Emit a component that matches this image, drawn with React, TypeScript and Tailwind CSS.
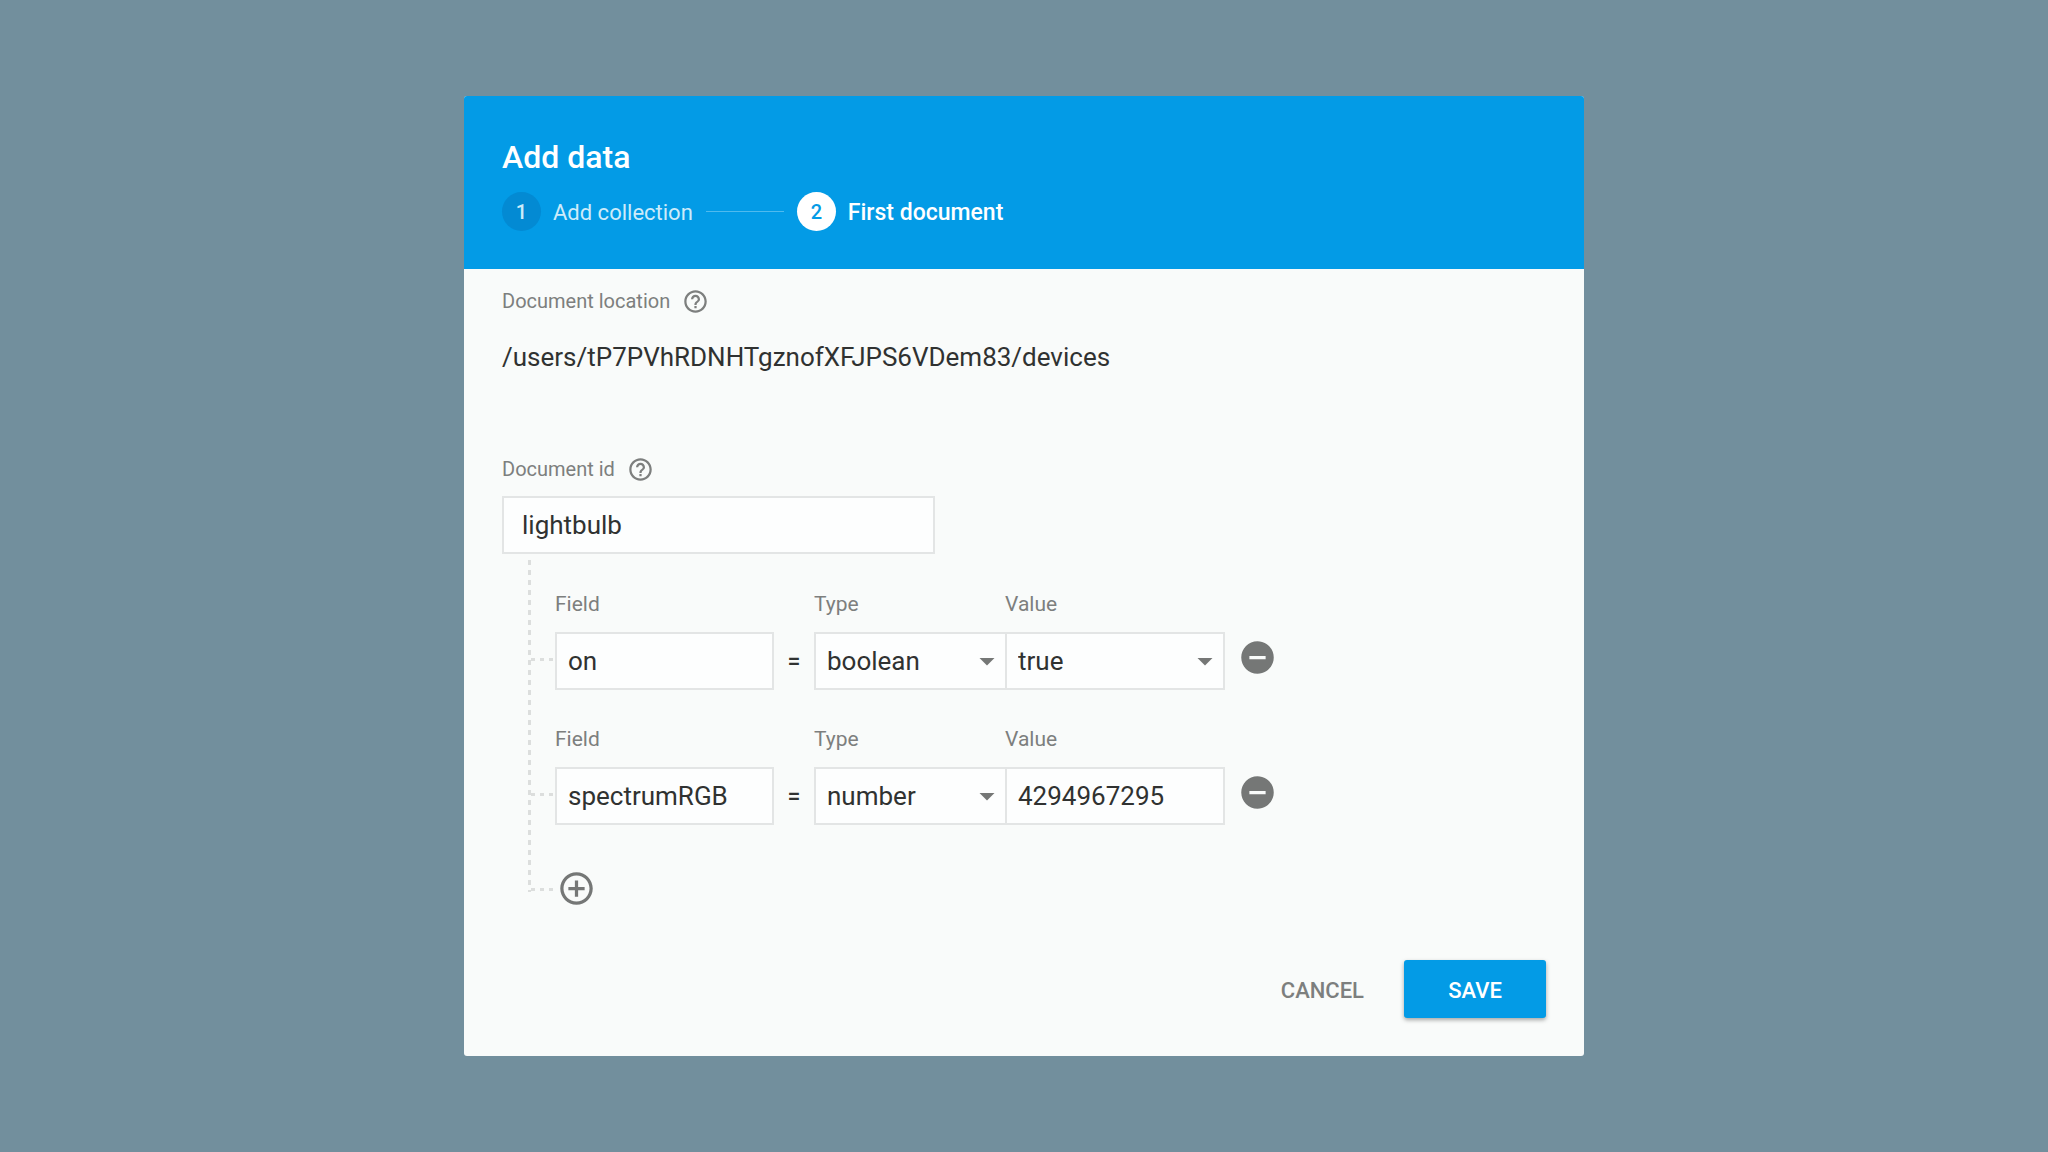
import { useState } from "react";
import type { ReactNode } from "react";
import {
  MdAddCircleOutline,
  MdArrowDropDown,
  MdHelpOutline,
  MdRemoveCircle,
} from "react-icons/md";

interface FieldRow {
  id: number;
  name: string;
  type: string;
  value: string;
}

const TYPES = ["string", "number", "boolean", "map", "array", "null"];

const INITIAL_FIELDS: FieldRow[] = [
  { id: 1, name: "on", type: "boolean", value: "true" },
  { id: 2, name: "spectrumRGB", type: "number", value: "4294967295" },
];

const SECTION_LABEL = "text-[20px] leading-6 text-[#7d7f7e]";
const FIELD_LABEL = "text-[21px] leading-6 text-[#7d7f7e]";
const BOX =
  "h-[58px] w-full rounded-none border-2 border-[#e3e5e5] bg-[#fdfefe] text-[26px] text-[#303231] outline-none";

// Dashed branch from the tree's trunk to a row
function Branch() {
  return (
    <div className="h-[3px] w-[23px] bg-[repeating-linear-gradient(90deg,#dcdedd_0_4px,transparent_4px_9px)]" />
  );
}

function Select({
  id,
  value,
  options,
  onChange,
}: {
  id: string;
  value: string;
  options: string[];
  onChange: (value: string) => void;
}) {
  return (
    <div className="relative">
      <select
        id={id}
        value={value}
        onChange={(e) => onChange(e.target.value)}
        className={`${BOX} appearance-none pl-[11px] pr-10`}
      >
        {options.map((o) => (
          <option key={o}>{o}</option>
        ))}
      </select>
      <MdArrowDropDown
        size={36}
        className="pointer-events-none absolute right-0.5 top-[11px] text-[#757776]"
      />
    </div>
  );
}

function Labelled({
  id,
  label,
  className,
  children,
}: {
  id: string;
  label: string;
  className: string;
  children: ReactNode;
}) {
  return (
    <div className={`flex flex-col gap-4 ${className}`}>
      <label htmlFor={id} className={FIELD_LABEL}>
        {label}
      </label>
      {children}
    </div>
  );
}

function HelpButton({ label }: { label: string }) {
  return (
    <button type="button" aria-label={label} className="text-[#7d7f7e]">
      <MdHelpOutline size={27} />
    </button>
  );
}

export default function App() {
  const [docId, setDocId] = useState("lightbulb");
  const [fields, setFields] = useState(INITIAL_FIELDS);

  const update = (id: number, patch: Partial<FieldRow>) =>
    setFields((rows) => rows.map((r) => (r.id === id ? { ...r, ...patch } : r)));

  const addField = () =>
    setFields((rows) => [...rows, { id: Date.now(), name: "", type: "string", value: "" }]);

  return (
    <main className="flex min-h-screen items-center justify-center bg-[#728f9d] font-[Roboto,sans-serif]">
      <form
        className="w-full max-w-[1120px] overflow-hidden rounded-[3px] bg-[#f9fbfa]"
        onSubmit={(e) => e.preventDefault()}
      >
        {/* Header with stepper */}
        <header className="flex flex-col gap-[15px] bg-[#039be6] px-[38px] pb-[38px] pt-[41px] text-white">
          <h1 className="text-[32px] font-medium leading-10">Add data</h1>
          <ol className="flex items-center">
            <li className="flex items-center gap-3 text-[22px] text-[#cdebfa]">
              <span className="flex size-[39px] items-center justify-center rounded-full bg-[#038ad3] text-[20px] font-medium">
                1
              </span>
              <span className="pt-0.5 leading-8">Add collection</span>
            </li>
            <li aria-hidden className="mx-[13px] h-px w-[78px] bg-[#4fbaee]" />
            <li className="flex items-center gap-3 text-[23px] font-medium">
              <span className="flex size-[39px] items-center justify-center rounded-full bg-white text-[20px] text-[#039be6]">
                2
              </span>
              <span className="pt-0.5 leading-8">First document</span>
            </li>
          </ol>
        </header>

        <div className="px-[38px] pb-[38px] pt-5">
          <div className="flex h-6 items-center gap-3">
            <span className={SECTION_LABEL}>Document location</span>
            <HelpButton label="About the document location" />
          </div>
          <p className="mt-7 text-[26px] leading-8 text-[#303231]">
            /users/tP7PVhRDNHTgznofXFJPS6VDem83/devices
          </p>

          <div className="mt-[84px] flex h-6 items-center gap-3">
            <label htmlFor="doc-id" className={SECTION_LABEL}>
              Document id
            </label>
            <HelpButton label="About the document id" />
          </div>
          <div className="mt-[15px] max-w-[433px]">
            <input
              id="doc-id"
              value={docId}
              onChange={(e) => setDocId(e.target.value)}
              className={`${BOX} px-[18px]`}
            />
          </div>

          {/* Field tree */}
          <div className="ml-[26px] mt-1.5 flex">
            <div className="mb-4 w-[3px] bg-[repeating-linear-gradient(180deg,#dcdedd_0_5px,transparent_5px_10px)]" />
            <div className="flex flex-1 flex-col gap-[37px] pt-8">
              {fields.map((f) => (
                <div key={f.id} className="flex items-end">
                  <div className="flex h-[58px] w-6 items-center pb-1">
                    <Branch />
                  </div>
                  <Labelled id={`name-${f.id}`} label="Field" className="w-[219px]">
                    <input
                      id={`name-${f.id}`}
                      value={f.name}
                      onChange={(e) => update(f.id, { name: e.target.value })}
                      className={`${BOX} px-[11px]`}
                    />
                  </Labelled>
                  <span className="flex h-[58px] w-10 items-center justify-center pt-0.5 text-[23px] font-medium text-[#303231]">
                    =
                  </span>
                  <Labelled id={`type-${f.id}`} label="Type" className="w-[193px]">
                    <Select
                      id={`type-${f.id}`}
                      value={f.type}
                      options={TYPES}
                      onChange={(type) => update(f.id, { type })}
                    />
                  </Labelled>
                  <Labelled id={`value-${f.id}`} label="Value" className="-ml-0.5 w-[220px]">
                    {f.type === "boolean" ? (
                      <Select
                        id={`value-${f.id}`}
                        value={f.value}
                        options={["true", "false"]}
                        onChange={(value) => update(f.id, { value })}
                      />
                    ) : (
                      <input
                        id={`value-${f.id}`}
                        value={f.value}
                        onChange={(e) => update(f.id, { value: e.target.value })}
                        className={`${BOX} px-[11px]`}
                      />
                    )}
                  </Labelled>
                  <button
                    type="button"
                    aria-label="Remove field"
                    onClick={() => setFields((rows) => rows.filter((r) => r.id !== f.id))}
                    className="ml-[13px] h-[58px] pb-2 text-[#757776]"
                  >
                    <MdRemoveCircle size={39} />
                  </button>
                </div>
              ))}
              <div className="mt-[7px] flex h-[39px] items-center">
                <div className="pt-0.5">
                  <Branch />
                </div>
                <button
                  type="button"
                  aria-label="Add field"
                  onClick={addField}
                  className="ml-[3px] text-[#757776]"
                >
                  <MdAddCircleOutline size={39} />
                </button>
              </div>
            </div>
          </div>

          {/* Actions */}
          <div className="mt-[52px] flex justify-end gap-3 text-[22px] font-medium">
            <button type="button" className="h-[58px] px-7 pt-0.5 text-[#7d7f7e]">
              CANCEL
            </button>
            <button
              type="submit"
              className="h-[58px] w-[142px] rounded-[3px] bg-[#039be6] pt-0.5 text-white shadow-[0_2px_4px_rgba(0,0,0,0.35)]"
            >
              SAVE
            </button>
          </div>
        </div>
      </form>
    </main>
  );
}
